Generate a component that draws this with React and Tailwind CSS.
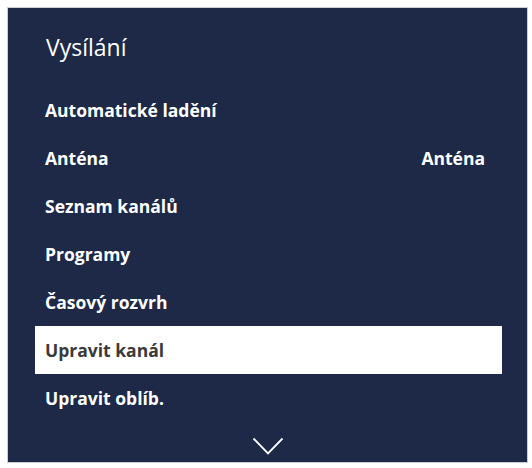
import React from "react";

const items = [
  { label: "Automatické ladění" },
  { label: "Anténa", value: "Anténa" },
  { label: "Seznam kanálů" },
  { label: "Programy" },
  { label: "Časový rozvrh" },
  { label: "Upravit kanál", active: true },
  { label: "Upravit oblíb." },
];

export default function App() {
  return (
    <div
      className="w-[532px] h-[468px] bg-white pt-[7px] pl-[7px]"
      style={{ fontFamily: "'Open Sans', sans-serif" }}
    >
      <div className="w-[521px] h-[456px] bg-[#1d2946] flex flex-col border border-[#c9ccd3]">
        <div className="pl-[38px] pt-[24px] h-[78px] text-[23px] leading-[30px] text-white">
          Vysílání
        </div>
        <div className="flex flex-col ml-[27px] mr-[25px]">
          {items.map((it) => (
            <div
              key={it.label}
              className={
                it.active
                  ? "h-12 flex items-center justify-between pl-[10px] pr-[17px] bg-white text-[#3a3a3a] text-[17.5px] font-bold"
                  : "h-12 flex items-center justify-between pl-[10px] pr-[17px] text-white text-[17.5px] font-bold"
              }
            >
              <span>{it.label}</span>
              {it.value && <span>{it.value}</span>}
            </div>
          ))}
        </div>
        <div className="flex justify-center mt-[15px]">
          <svg width="32" height="19" viewBox="0 0 32 19" fill="none">
            <path d="M1.5 1.5 L16 16.5 L30.5 1.5" stroke="white" strokeWidth="1.8" strokeLinecap="butt" strokeLinejoin="miter" />
          </svg>
        </div>
      </div>
    </div>
  );
}
